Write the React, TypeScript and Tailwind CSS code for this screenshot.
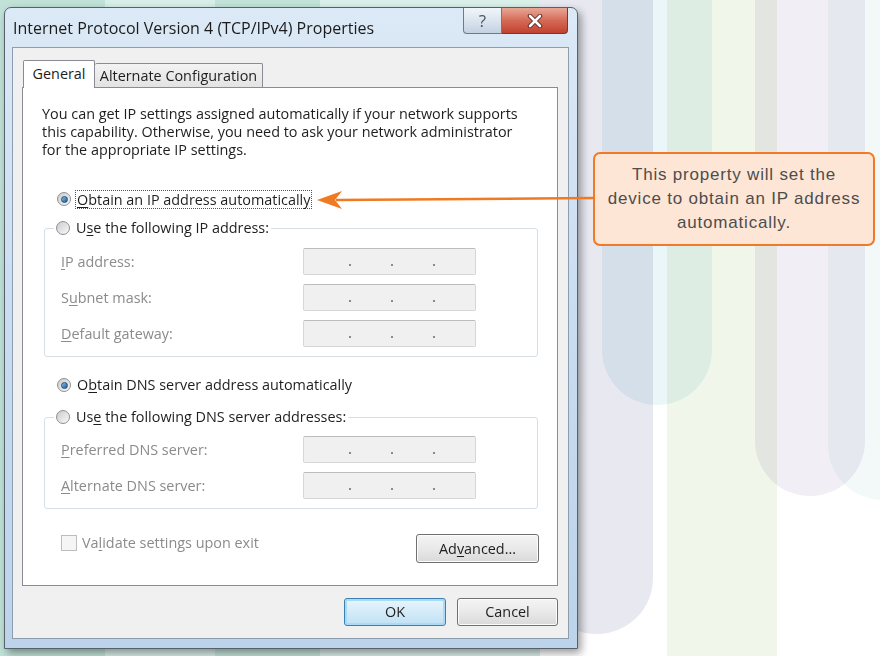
import React from "react";

const win = "font-['Open_Sans',sans-serif]";

function Radio({ checked }: { checked?: boolean }) {
  return (
    <span className="flex h-[14px] w-[14px] shrink-0 items-center justify-center rounded-full border border-[#8f9093] bg-linear-to-br from-[#cbcbcb] to-[#fafafa]">
      {checked && <span className="h-[7px] w-[7px] rounded-full border border-[#1f4f7c] bg-linear-to-br from-[#8cc0ea] to-[#175a98]" />}
    </span>
  );
}

function IpField() {
  return (
    <div className="flex h-[27px] w-[173px] items-end gap-[40px] rounded-[2px] border border-[#d6d6d6] border-t-[#bcbcbc] bg-[#f0f0f0] pb-[8px] pl-[45px]">
      {[0, 1, 2].map((i) => (
        <span key={i} className="h-[2px] w-[2px] bg-[#8a8a8a]" />
      ))}
    </div>
  );
}

function Row({ label, u, rest }: { label: string; u: string; rest: string }) {
  return (
    <div className="grid grid-cols-[242px_173px] items-center">
      <span className="text-[#8b8b8b]">
        {label}
        <u className="underline-offset-2">{u}</u>
        {rest}
      </span>
      <IpField />
    </div>
  );
}

function Btn({ children, primary, w, h = "h-[28px]" }: { children: React.ReactNode; primary?: boolean; w: string; h?: string }) {
  return (
    <div
      className={`flex ${h} ${w} items-center justify-center rounded-[3px] border text-[#1e1e1e] ${
        primary
          ? "border-[#3c7fb1] bg-linear-to-b from-[#e9f5fc] to-[#bfe1f5] shadow-[inset_0_0_0_2px_#a9dbf6]"
          : "border-[#707070] bg-linear-to-b from-[#f4f4f4] via-[#e9e9e9] to-[#d9d9d9] shadow-[inset_0_0_0_1px_#fcfcfc]"
      }`}
    >
      {children}
    </div>
  );
}

function Pillar({ cls }: { cls: string }) {
  return <div className={`absolute top-0 mix-blend-multiply ${cls}`} />;
}

export default function App() {
  return (
    <div className="relative h-[656px] w-[880px] overflow-hidden bg-white">
      {/* background pillars */}
      <Pillar cls="left-[-30px] w-[135px] h-[700px] bg-[#c0e2d7]" />
      <Pillar cls="left-[105px] w-[110px] h-[700px] bg-[#d8eee8]" />
      <Pillar cls="left-[215px] w-[105px] h-[700px] bg-[#c2e3d8]" />
      <Pillar cls="left-[320px] w-[220px] h-[700px] bg-[#d9efe9]" />
      <Pillar cls="left-[540px] w-[113px] h-[634px] rounded-b-[56px] bg-[#e8e8f1]" />
      <Pillar cls="left-[602px] w-[110px] h-[405px] rounded-b-[55px] bg-[#eaf6f7]" />
      <Pillar cls="left-[667px] w-[110px] h-[700px] bg-[#f1f6eb]" />
      <Pillar cls="left-[755px] w-[110px] h-[496px] rounded-b-[55px] bg-[#f1eef5]" />
      <Pillar cls="left-[828px] w-[110px] h-[500px] rounded-b-[55px] bg-[#f3f9f9]" />

      {/* dialog window */}
      <div className={`relative ml-[4px] mt-[7px] w-[574px] rounded-t-[7px] border border-[#56616d] bg-linear-to-b from-[#dce9f6] via-[#c9dcf0] to-[#bcd3ea] pb-[9px] pl-[7px] pr-[8px] text-[14.4px] leading-[20px] text-[#1e1e1e] shadow-[3px_4px_8px_rgba(0,0,0,0.4)] ${win}`}>
        <div className="flex h-[39px]">
          <span className="mt-[10px] pl-[1px] text-[16px] text-[#1b1b1b]">Internet Protocol Version 4 (TCP/IPv4) Properties</span>
          <div className="ml-auto mr-[1px] flex self-start">
            <div className="flex h-[26px] w-[39px] items-center justify-center rounded-bl-[4px] border border-t-0 border-[#6c7a8a] bg-linear-to-b from-[#f0f5fa] via-[#dbe5ef] to-[#c2d2e2] text-[17px] text-[#4a5663]">
              ?
            </div>
            <div className="flex h-[26px] w-[66px] items-center justify-center rounded-br-[4px] border border-l-0 border-t-0 border-[#6e3a34] bg-linear-to-b from-[#e8a796] via-[#d46a56] to-[#c2402f]">
              <svg width="16" height="14" viewBox="0 0 16 14">
                <path d="M3 2 L13 12 M13 2 L3 12" stroke="#5a2a24" strokeWidth="4.5" strokeLinecap="round" />
                <path d="M3 2 L13 12 M13 2 L3 12" stroke="#ffffff" strokeWidth="2.6" strokeLinecap="round" />
              </svg>
            </div>
          </div>
        </div>

        {/* client area */}
        <div className="flex flex-col border border-[#8d9db0] bg-[#f0f0f0] pb-[12px] pl-[9px] pr-[10px] pt-[12px]">
          <div className="ml-[1px] flex items-end">
            <div className="relative z-10 mb-[-1px] flex h-[28px] w-[72px] items-center justify-center rounded-t-[2px] border border-b-0 border-[#898c95] bg-white pb-[2px]">
              General
            </div>
            <div className="flex h-[24px] w-[168px] items-center justify-center rounded-t-[2px] border border-b-0 border-l-0 border-[#898c95] bg-linear-to-b from-[#f3f3f3] to-[#e3e3e3]">
              Alternate Configuration
            </div>
          </div>

          {/* tab page */}
          <div className="flex h-[499px] flex-col border border-[#898c95] bg-white pl-[19px] pr-[18px] pt-[17px]">
            <p className="leading-[18px]">
              You can get IP settings assigned automatically if your network supports
              <br />
              this capability. Otherwise, you need to ask your network administrator
              <br />
              for the appropriate IP settings.
            </p>

            <div className="ml-[15px] mt-[30px] flex h-[20px] items-center gap-[4px]">
              <Radio checked />
              <span className="border border-dotted border-[#555] px-[1px] leading-[17px]">
                <u className="underline-offset-2">O</u>btain an IP address automatically
              </span>
            </div>

            <fieldset className="ml-[2px] mt-[9px] w-[494px] rounded-[3px] border border-[#d5dfe5] pb-[9px] pl-[16px]">
              <legend className="-ml-[7px] flex h-[20px] items-center gap-[6px] px-[2px]">
                <Radio />
                <span>
                  U<u className="underline-offset-2">s</u>e the following IP address:
                </span>
              </legend>
              <div className="mt-[10px] flex flex-col gap-[9px]">
                <Row label="" u="I" rest="P address:" />
                <Row label="S" u="u" rest="bnet mask:" />
                <Row label="" u="D" rest="efault gateway:" />
              </div>
            </fieldset>

            <div className="ml-[15px] mt-[18px] flex h-[20px] items-center gap-[6px]">
              <Radio checked />
              <span>
                O<u className="underline-offset-2">b</u>tain DNS server address automatically
              </span>
            </div>

            <fieldset className="ml-[2px] mt-[12px] w-[494px] rounded-[3px] border border-[#d5dfe5] pb-[9px] pl-[16px]">
              <legend className="-ml-[7px] flex h-[20px] items-center gap-[6px] px-[2px]">
                <Radio />
                <span>
                  Us<u className="underline-offset-2">e</u> the following DNS server addresses:
                </span>
              </legend>
              <div className="mt-[9px] flex flex-col gap-[9px]">
                <Row label="" u="P" rest="referred DNS server:" />
                <Row label="" u="A" rest="lternate DNS server:" />
              </div>
            </fieldset>

            <div className="mt-[25px] flex items-start">
              <span className="ml-[19px] mt-[1px] h-[16px] w-[16px] border border-[#bdbdbd] bg-[#f5f5f5]" />
              <span className="ml-[5px] leading-[17px] text-[#8b8b8b]">
                Va<u className="underline-offset-2">l</u>idate settings upon exit
              </span>
              <div className="ml-auto">
                <Btn w="w-[123px]" h="h-[29px]">
                  <span>
                    Ad<u className="underline-offset-2">v</u>anced...
                  </span>
                </Btn>
              </div>
            </div>
          </div>

          <div className="mt-[12px] flex justify-end gap-[11px]">
            <Btn primary w="w-[102px]">OK</Btn>
            <Btn w="w-[101px]">Cancel</Btn>
          </div>
        </div>
      </div>

      {/* callout */}
      <div className="absolute left-[593px] top-[152px] flex h-[94px] w-[282px] items-center justify-center rounded-[7px] border-2 border-[#f07a26] bg-[#fde6d6] text-center font-['Liberation_Sans',Arial,sans-serif] text-[17px] leading-[24px] tracking-[0.8px] text-[#4d4d4d]">
        This property will set the
        <br />
        device to obtain an IP address
        <br />
        automatically.
      </div>
      <svg className="pointer-events-none absolute left-0 top-0" width="880" height="656">
        <path d="M594 198 L336 200" stroke="#f07a22" strokeWidth="2.5" />
        <polygon points="317,200 342,191 335,200 342,209" fill="#f07a22" />
      </svg>
    </div>
  );
}
